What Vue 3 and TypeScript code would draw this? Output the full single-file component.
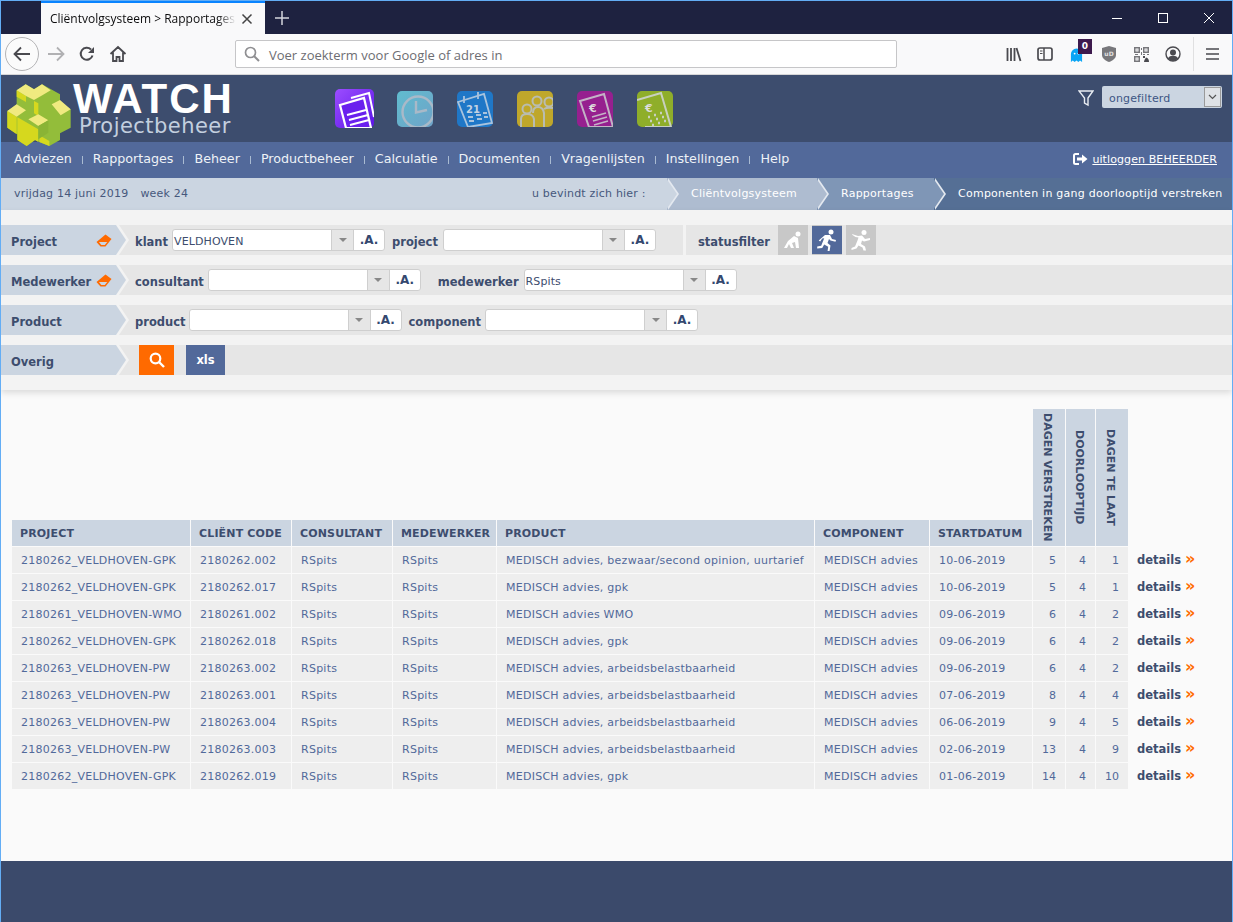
<template>
  <div class="window">
    <div class="titlebar">
      <div class="tab">
        <span class="tab-title">Cliëntvolgsysteem &gt; Rapportages &gt;</span>
        <svg class="tab-close" width="12" height="12" viewBox="0 0 12 12"><path d="M1.5 1.5l9 9M10.500 1.500l-9 9" stroke="#444" stroke-width="1.500" /></svg>
      </div>
      <svg class="new-tab" width="14" height="14" viewBox="0 0 14 14"><path d="M7 0v14M0 7h14" stroke="#d4d5dc" stroke-width="1.500" /></svg>
      <div class="window-controls">
        <svg width="10" height="10" viewBox="0 0 10 10"><path d="M0 5.500h10" stroke="#fff" /></svg>
        <svg width="10" height="10" viewBox="0 0 10 10"><rect x=".5" y=".5" width="9" height="9" fill="none" stroke="#fff" /></svg>
        <svg width="10" height="10" viewBox="0 0 10 10"><path d="M0 0l10 10M10 0L0 10" stroke="#fff" /></svg>
      </div>
    </div>

    <div class="toolbar">
      <div class="back">
        <svg width="18" height="16" viewBox="0 0 18 16"><path d="M17 8H2M8 1.500L1.500 8 8 14.500" fill="none" stroke="#4a4a4f" stroke-width="1.800" /></svg>
      </div>
      <svg class="fwd" width="18" height="16" viewBox="0 0 18 16"><path d="M1 8h15M10 1.500L16.500 8 10 14.500" fill="none" stroke="#b1b1b3" stroke-width="1.800" /></svg>
      <svg class="reload" width="16" height="16" viewBox="0 0 16 16"><path d="M13.500 9.500A6 6 0 1 1 12 3.500" fill="none" stroke="#4a4a4f" stroke-width="2" /><path d="M15 1v6H9z" fill="#4a4a4f" /></svg>
      <svg class="home" width="18" height="18" viewBox="0 0 18 18"><path d="M1.500 9L9 2l7.500 7M4 7.500V16h3.500v-4h3v4H14V7.500" fill="none" stroke="#4a4a4f" stroke-width="1.800" /></svg>
      <div class="urlbar">
        <svg width="16" height="16" viewBox="0 0 16 16"><circle cx="6.500" cy="6.500" r="5" fill="none" stroke="#8f8f92" stroke-width="1.700" /><path d="M10 10l5 5" stroke="#8f8f92" stroke-width="2" /></svg>
        <span>Voer zoekterm voor Google of adres in</span>
      </div>
      <div class="tools">
        <svg class="t-lib" width="16" height="15" viewBox="0 0 16 15"><path d="M1.500 1v13M5 1v13M8.500 1v13M10.500 1l4 13" fill="none" stroke="#4a4a4f" stroke-width="1.800" /></svg>
        <svg class="t-side" width="16" height="14" viewBox="0 0 16 14"><rect x="1" y="1" width="14" height="12" rx="2" fill="none" stroke="#4a4a4f" stroke-width="1.700" /><path d="M7 1v12" stroke="#4a4a4f" stroke-width="1.500" /><path d="M3 4h2.500M3 6.500h2.500" stroke="#4a4a4f" /></svg>
        <div class="ghost">
          <svg width="13" height="14" viewBox="0 0 14 15"><path d="M1 15V6.500a6 6 0 0 1 12 0V15l-2.200-1.500L9 15l-2-1.500L5 15l-2-1.500z" fill="#0aa5f5" /><circle cx="5" cy="6" r="1" fill="#fff" /><circle cx="9" cy="6" r="1" fill="#fff" /></svg>
          <span class="ghost-badge">0</span>
        </div>
        <svg class="t-ub" width="14" height="16" viewBox="0 0 14 16"><path d="M0 2l7-2 7 2v7c0 3-3 5.500-7 7-4-1.500-7-4-7-7z" fill="#77777b" /><text x="7" y="9.500" class="ub-text">uD</text></svg>
        <svg class="t-qr" width="15" height="15" viewBox="0 0 15 15"><path d="M0 0h6v6H0zM1.500 1.500v3h3v-3zM9 0h6v6H9zM10.500 1.500v3h3v-3zM0 9h6v6H0zM1.500 10.500v3h3v-3zM7 1h1v2H7zM7 5h1v3H7zM1 7h3v1H1zM9 7h2v1H9zM13 7h2v1h-2zM2.500 2.500h1v1h-1zM11.500 2.500h1v1h-1zM2.500 11.500h1v1h-1z" fill="#77777b" fill-rule="evenodd" /><path d="M9 9h2v2H9zM12 10.500q3 .5 3 4.500h-5q0-2 2-4.500z" fill="#4a4a4f" /></svg>
        <svg class="t-user" width="16" height="16" viewBox="0 0 16 16"><circle cx="8" cy="8" r="7" fill="none" stroke="#4a4a4f" stroke-width="1.400" /><circle cx="8" cy="6.500" r="3" fill="#4a4a4f" /><path d="M2.800 12.500c1-2 3-2.700 5.200-2.700s4.200.7 5.200 2.700A7 7 0 0 1 8 15a7 7 0 0 1-5.200-2.500z" fill="#4a4a4f" /></svg>
        <i class="tool-sep"></i>
        <svg class="t-menu" width="13" height="12" viewBox="0 0 13 12"><path d="M0 1h13M0 6h13M0 11h13" stroke="#4a4a4f" stroke-width="1.700" /></svg>
      </div>
    </div>

    <div class="app-head">
      <div class="brand">
        <svg class="logo" width="110" height="74" viewBox="3 0 330 222">
          <path d="M50 43L77 25l25 15 24-15 54 30v25l32 20v55l-32 17v20l-32 18-30-12-13-6-25 18-28-18v-17l-30-20v-50l28-20z" fill="#93bd3a" />
          <path d="M50 43l28 17v18L50 62zM22 105l28 17v53l-28-20zM50 122l65 38v38l-10-6-25 18-28-18v-70zM102 75l13 7v38l-13-8zM118 178l30 17v15l-30-12z" fill="#d6d81e" />
          <path d="M50 43L77 25l25 15 24-15 26 18-25 15-25 14-24-12zM22 105l28-20 28 18-28 19zM85 130l30-15 30 18-30 17zM155 85l25-13 32 28-30 18z" fill="#f0ea80" />
          <path d="M115 150l30-17v37l-30 20z" fill="#8ab435" />
        </svg>
        <div class="brand-text">
          <div class="brand-name">WATCH</div>
          <div class="brand-sub">Projectbeheer</div>
        </div>
      </div>

      <div class="modules">
        <svg class="mod" width="39" height="39" viewBox="0 0 39 39">
          <defs><linearGradient id="gp" x1="0" y1="0" x2="1" y2="1"><stop offset="0" stop-color="#9c4dff" /><stop offset="1" stop-color="#5a14e6" /></linearGradient></defs>
          <rect width="39" height="39" rx="5" fill="url(#gp)" />
          <path d="M16 9l18-5 5 24" fill="none" stroke="#fff" stroke-width="2" />
          <path d="M5 16L29 9l7 30H11z" fill="#6a20ee" stroke="#fff" stroke-width="2.200" />
          <path d="M12 26l19-5M14 31l19-5M15 36l19-5" stroke="#fff" stroke-width="2" />
        </svg>
        <svg class="mod sm" width="36" height="36" viewBox="0 0 36 36">
          <defs><linearGradient id="gc" x1="0" y1="0" x2="1" y2="1"><stop offset="0" stop-color="#60bccf" /><stop offset="1" stop-color="#6fa3c8" /></linearGradient></defs>
          <rect width="36" height="36" rx="5" fill="url(#gc)" />
          <circle cx="21" cy="21" r="15.500" fill="none" stroke="#a9b9c8" stroke-width="2.400" />
          <path d="M19 10v11.500l11-2.500" fill="none" stroke="#a9b9c8" stroke-width="2.400" />
        </svg>
        <svg class="mod sm" width="36" height="36" viewBox="0 0 36 36">
          <rect width="36" height="36" rx="5" fill="#1f77c7" />
          <path d="M1 11l26-8 8 29-24 4z" fill="none" stroke="#a9c3dd" stroke-width="1.800" />
          <path d="M7 5v7M21 1v7" stroke="#a9c3dd" stroke-width="1.800" />
          <text x="16" y="22" class="cal-text">21</text>
          <path d="M11 26h5M19 24h5M26 22h4M12 30h5M20 28h5M27 26h4" stroke="#a9c3dd" stroke-width="2" />
        </svg>
        <svg class="mod sm" width="36" height="36" viewBox="0 0 36 36">
          <rect width="36" height="36" rx="5" fill="#bfa72b" />
          <circle cx="10" cy="18" r="4.500" fill="none" stroke="#b9bcb0" stroke-width="2" />
          <circle cx="20" cy="10" r="4.500" fill="none" stroke="#b9bcb0" stroke-width="2" />
          <circle cx="32" cy="11" r="4.500" fill="none" stroke="#b9bcb0" stroke-width="2" />
          <path d="M4 36V28q0-5 6-5t7 5v8M16 22q0-6 5-6t6 6v14M27 18q3-2 9-1" fill="none" stroke="#b9bcb0" stroke-width="2" />
        </svg>
        <svg class="mod sm" width="36" height="36" viewBox="0 0 36 36">
          <rect width="36" height="36" rx="5" fill="#96208f" />
          <path d="M3 10l24-7 9 33H12z" fill="none" stroke="#c3b3c6" stroke-width="2" />
          <text x="12" y="21" class="eur-text">€</text>
          <path d="M15 26l14-4M16 30l14-4M17 34l14-4" stroke="#c3b3c6" stroke-width="1.600" />
        </svg>
        <svg class="mod sm" width="36" height="36" viewBox="0 0 36 36">
          <rect width="36" height="36" rx="5" fill="#8fae2a" />
          <path d="M0 9l24-7 10 34H8" fill="none" stroke="#c8d0bf" stroke-width="2" />
          <text x="8" y="21" class="eur-text">€</text>
          <path d="M11 26h2M17 24h2M23 22h2M13 30h2M19 28h2M25 26h2M15 34h2M21 32h2M27 30h2" stroke="#c8d0bf" stroke-width="2.400" />
        </svg>
      </div>

      <div class="head-filter">
        <svg width="16" height="18" viewBox="0 0 16 18"><path d="M1 2h14L10 9v7L6.500 14V9z" fill="none" stroke="#e9edf3" stroke-width="1.400" /></svg>
        <div class="head-select">
          <span>ongefilterd</span>
          <div class="head-select-btn">
            <svg width="9" height="6" viewBox="0 0 9 6"><path d="M1 1l3.500 3.500L8 1" fill="none" stroke="#555" stroke-width="1.200" /></svg>
          </div>
        </div>
      </div>
    </div>

    <nav class="mainnav">
      <div class="nav-items">
        <template v-for="(item, i) in navItems" :key="item">
          <i v-if="i > 0" class="nav-sep"></i>
          <a>{{ item }}</a>
        </template>
      </div>
      <a class="logout">
        <svg width="15" height="12" viewBox="0 0 15 12"><path d="M6 1H2.500A1.500 1.500 0 0 0 1 2.500v7A1.500 1.500 0 0 0 2.500 11H6" fill="none" stroke="#fff" stroke-width="2" /><path d="M4 4.500h5V1.500L14.500 6 9 10.500v-3H4z" fill="#fff" /></svg>
        <span>uitloggen BEHEERDER</span>
      </a>
    </nav>

    <div class="crumbbar">
      <div class="crumb-date">
        <span>vrijdag 14 juni 2019</span>
        <span>week 24</span>
      </div>
      <div class="crumb-here">u bevindt zich hier :</div>
      <div class="crumb c1">Cliëntvolgsysteem</div>
      <div class="crumb c2">Rapportages</div>
      <div class="crumb c3">Componenten in gang doorlooptijd verstreken</div>
    </div>

    <section class="filters">
      <div class="frow">
        <div class="flabel">
          <span>Project</span>
          <svg class="eraser" width="16" height="13" viewBox="0 0 16 13"><path d="M9.500.5l6 4.500-6 7.500H4.500L.5 8z" fill="#ff6a00" /><path d="M3 8h8.300l-2.500 3H5.300z" fill="#cbd5e1" /></svg>
        </div>
        <div class="fields f-project">
          <label>klant</label>
          <div class="combo w-160"><span>VELDHOVEN</span><b><i></i></b><em>.A.</em></div>
          <label class="loose">project</label>
          <div class="combo w-160"><span></span><b><i></i></b><em>.A.</em></div>
        </div>
        <div class="status-group">
          <label>statusfilter</label>
          <button class="status">
            <svg width="22" height="20" viewBox="0 0 22 20"><circle cx="16" cy="4" r="2.500" fill="#fff" /><path d="M2 18l4-7 6-5 4 2 1 10h-3l-1-6-3 1 2 5H9l-2-4-2 4z" fill="#fff" /></svg>
          </button>
          <button class="status on">
            <svg width="22" height="22" viewBox="0 0 22 22"><circle cx="15" cy="3" r="2.500" fill="#fff" /><path d="M9 6l5 0 2 4 4 1-.5 1.800-5-1.300-1.500-1.500-1.500 4 3 2.500-1 6h-2l.7-4.700-4-2.300-2 3.500-5 .5v-2l4-.7 3-7.500-2 .3-2 3-1.500-1z" fill="#fff" /></svg>
          </button>
          <button class="status">
            <svg width="22" height="22" viewBox="0 0 22 22"><circle cx="14" cy="3.500" r="2.500" fill="#fff" /><path d="M2 5l6 2 4-.5 3 3.500 5-1v2l-6 1.500-2-1-1 3.500 4 2.500 1 4h-2.500l-1-3-4-2-2 3-5 1.500v-2l3.500-1.500 2.500-6 1-3-3-.5-3-2z" fill="#fff" /></svg>
          </button>
        </div>
      </div>

      <div class="frow">
        <div class="flabel">
          <span>Medewerker</span>
          <svg class="eraser" width="16" height="13" viewBox="0 0 16 13"><path d="M9.500.5l6 4.500-6 7.500H4.500L.5 8z" fill="#ff6a00" /><path d="M3 8h8.300l-2.500 3H5.300z" fill="#cbd5e1" /></svg>
        </div>
        <div class="fields">
          <label>consultant</label>
          <div class="combo w-160"><span></span><b><i></i></b><em>.A.</em></div>
          <label class="gap-left">medewerker</label>
          <div class="combo w-160"><span>RSpits</span><b><i></i></b><em>.A.</em></div>
        </div>
      </div>

      <div class="frow">
        <div class="flabel"><span>Product</span></div>
        <div class="fields">
          <label class="tight">product</label>
          <div class="combo w-160"><span></span><b><i></i></b><em>.A.</em></div>
          <label>component</label>
          <div class="combo w-160"><span></span><b><i></i></b><em>.A.</em></div>
        </div>
      </div>

      <div class="frow">
        <div class="flabel"><span>Overig</span></div>
        <div class="fields f-other">
          <button class="btn-search">
            <svg width="16" height="16" viewBox="0 0 16 16"><circle cx="6.500" cy="6.500" r="4.800" fill="none" stroke="#fff" stroke-width="2.200" /><path d="M10 10l5 5" stroke="#fff" stroke-width="2.400" /></svg>
          </button>
          <button class="btn-xls">xls</button>
        </div>
      </div>
    </section>

    <main class="content">
      <table class="report">
        <colgroup>
          <col v-for="w in colWidths" :key="w.id" :style="{ width: w.px + 'px' }" />
        </colgroup>
        <thead>
          <tr>
            <td colspan="7" class="blank spacer"></td>
            <th rowspan="2" class="vert"><span>DAGEN VERSTREKEN</span></th>
            <th rowspan="2" class="vert"><span>DOORLOOPTIJD</span></th>
            <th rowspan="2" class="vert"><span>DAGEN TE LAAT</span></th>
            <td rowspan="2" class="blank"></td>
          </tr>
          <tr>
            <th v-for="h in headers" :key="h">{{ h }}</th>
          </tr>
        </thead>
        <tbody>
          <tr v-for="(r, i) in rows" :key="i">
            <td>{{ r.project }}</td>
            <td>{{ r.code }}</td>
            <td>RSpits</td>
            <td>RSpits</td>
            <td>{{ r.product }}</td>
            <td>MEDISCH advies</td>
            <td>{{ r.start }}</td>
            <td class="num">{{ r.past }}</td>
            <td class="num">4</td>
            <td class="num">{{ r.late }}</td>
            <td class="details">details <span>»</span></td>
          </tr>
        </tbody>
      </table>
    </main>

    <footer class="pagefoot"></footer>
  </div>
</template>

<script setup lang="ts">
interface ReportRow {
  project: string;
  code: string;
  product: string;
  start: string;
  past: number;
  late: number;
}

const navItems = [
  "Adviezen",
  "Rapportages",
  "Beheer",
  "Productbeheer",
  "Calculatie",
  "Documenten",
  "Vragenlijsten",
  "Instellingen",
  "Help",
];

const headers = [
  "PROJECT",
  "CLIËNT CODE",
  "CONSULTANT",
  "MEDEWERKER",
  "PRODUCT",
  "COMPONENT",
  "STARTDATUM",
];

const colWidths = [
  { id: "project", px: 179 },
  { id: "code", px: 101 },
  { id: "cons", px: 101 },
  { id: "mdw", px: 104 },
  { id: "product", px: 318 },
  { id: "comp", px: 115 },
  { id: "start", px: 103 },
  { id: "past", px: 33 },
  { id: "loop", px: 30 },
  { id: "late", px: 33 },
  { id: "det", px: 100 },
];

const GPK = "2180262_VELDHOVEN-GPK";
const PW = "2180263_VELDHOVEN-PW";
const ARBEID = "MEDISCH advies, arbeidsbelastbaarheid";

const rows: ReportRow[] = [
  { project: GPK, code: "2180262.002", product: "MEDISCH advies, bezwaar/second opinion, uurtarief", start: "10-06-2019", past: 5, late: 1 },
  { project: GPK, code: "2180262.017", product: "MEDISCH advies, gpk", start: "10-06-2019", past: 5, late: 1 },
  { project: "2180261_VELDHOVEN-WMO", code: "2180261.002", product: "MEDISCH advies WMO", start: "09-06-2019", past: 6, late: 2 },
  { project: GPK, code: "2180262.018", product: "MEDISCH advies, gpk", start: "09-06-2019", past: 6, late: 2 },
  { project: PW, code: "2180263.002", product: ARBEID, start: "09-06-2019", past: 6, late: 2 },
  { project: PW, code: "2180263.001", product: ARBEID, start: "07-06-2019", past: 8, late: 4 },
  { project: PW, code: "2180263.004", product: ARBEID, start: "06-06-2019", past: 9, late: 5 },
  { project: PW, code: "2180263.003", product: ARBEID, start: "02-06-2019", past: 13, late: 9 },
  { project: GPK, code: "2180262.019", product: "MEDISCH advies, gpk", start: "01-06-2019", past: 14, late: 10 },
];
</script>

<style>
html,
body {
  margin: 0;
  background: #fafafa;
}
</style>

<style scoped>
.window {
  width: 1233px;
  height: 922px;
  box-sizing: border-box;
  border: 1px solid #63adf5;
  border-bottom: 0;
  display: flex;
  flex-direction: column;
  overflow: hidden;
  font-family: "DejaVu Sans", Verdana, sans-serif;
  font-size: 11px;
  color: #3d4d6e;
  background: #fafafa;
}

/* browser chrome */
.titlebar {
  height: 33px;
  background: #1e2240;
  display: flex;
  align-items: stretch;
  flex: none;
}
.tab {
  width: 224px;
  margin-left: 40px;
  background: #f9f9fa;
  border-top: 2px solid #0a84ff;
  box-sizing: border-box;
  display: flex;
  align-items: center;
  padding-left: 9px;
  font-family: "Open Sans", sans-serif;
  font-size: 12px;
  color: #0c0c0d;
}
.tab-title {
  width: 186px;
  flex: none;
  white-space: nowrap;
  overflow: hidden;
  -webkit-mask-image: linear-gradient(90deg, #000 90%, transparent 100%);
  mask-image: linear-gradient(90deg, #000 90%, transparent 100%);
}
.tab-close {
  margin-left: 5px;
}
.new-tab {
  align-self: center;
  margin-left: 10px;
}
.window-controls {
  margin-left: auto;
  display: flex;
  align-items: center;
  gap: 36px;
  padding-right: 18px;
}

.toolbar {
  height: 40px;
  flex: none;
  background: #f9f9fa;
  border-bottom: 1px solid #d6d6d7;
  display: flex;
  align-items: center;
}
.back {
  width: 32px;
  height: 32px;
  margin-left: 4px;
  border: 1px solid #b4b4b6;
  border-radius: 50%;
  display: flex;
  align-items: center;
  justify-content: center;
  background: #fbfbfb;
}
.fwd {
  margin-left: 8px;
}
.reload {
  margin-left: 14px;
}
.home {
  margin-left: 14px;
}
.urlbar {
  margin-left: 108px;
  width: 662px;
  height: 28px;
  box-sizing: border-box;
  background: #fff;
  border: 1px solid #c6c6c8;
  border-radius: 2px;
  display: flex;
  align-items: center;
  gap: 9px;
  padding-left: 8px;
  font-family: "Open Sans", sans-serif;
  font-size: 13px;
  color: #6d6d72;
}
.urlbar span {
  padding-top: 2px;
}
.tools {
  margin-left: auto;
  display: flex;
  align-items: center;
  padding-right: 13px;
}
.t-side {
  margin-left: 15px;
}
.ghost {
  position: relative;
  margin-left: 17px;
  height: 16px;
}
.ghost svg {
  display: block;
  margin-top: 2px;
}
.ghost-badge {
  position: absolute;
  left: 8px;
  top: -7px;
  width: 14px;
  height: 15px;
  background: #3d1a4d;
  color: #fff;
  font-size: 9px;
  font-weight: 700;
  text-align: center;
  line-height: 15px;
}
.t-ub {
  margin-left: 19px;
}
.t-qr {
  margin-left: 18px;
}
.t-user {
  margin-left: 16px;
}
.tool-sep {
  width: 1px;
  height: 34px;
  background: #e0e0e1;
  margin-left: 12px;
}
.t-menu {
  margin-left: 12px;
}
.ub-text {
  font-family: "DejaVu Sans", sans-serif;
  font-size: 6px;
  font-weight: 700;
  fill: #e0e0e0;
  text-anchor: middle;
}

/* application header */
.app-head {
  height: 67px;
  flex: none;
  background: #3d4d6e;
  display: flex;
  position: relative;
  z-index: 2;
}
.brand {
  position: relative;
  width: 334px;
  flex: none;
  box-sizing: border-box;
  padding: 6px 0 0 72px;
}
/* the logo hangs over the top edge of the menu bar */
.logo {
  position: absolute;
  left: 0;
  top: 1px;
}
.brand-name {
  font-family: "Liberation Sans", Arial, sans-serif;
  font-weight: 700;
  font-size: 42px;
  line-height: 35px;
  color: #fff;
  letter-spacing: 2px;
}
.brand-sub {
  font-family: "DejaVu Sans", sans-serif;
  font-size: 21px;
  line-height: 20px;
  letter-spacing: 0.45px;
  color: #c3cfdf;
  margin-left: 6px;
}
.modules {
  display: flex;
  align-items: flex-start;
  padding-top: 14px;
  gap: 24px;
}
.mod {
  display: block;
}
.mod.sm {
  margin-top: 2px;
}
.modules .mod:first-child {
  margin-right: -1px;
}
.cal-text {
  font-family: "DejaVu Sans", sans-serif;
  font-size: 10px;
  font-weight: 700;
  fill: #c3d2e2;
  text-anchor: middle;
}
.eur-text {
  font-family: "DejaVu Sans", sans-serif;
  font-size: 11px;
  font-weight: 700;
  fill: #ddd;
}
.head-filter {
  margin-left: auto;
  display: flex;
  align-items: flex-start;
  padding: 11px 10px 0 0;
  gap: 8px;
}
.head-filter > svg {
  margin-top: 3px;
}
.head-select {
  width: 120px;
  height: 22px;
  background: #cbd5e1;
  border-radius: 2px;
  display: flex;
  align-items: center;
  justify-content: space-between;
  padding-left: 7px;
  box-sizing: border-box;
  color: #3d5584;
  font-size: 11px;
  letter-spacing: 0.15px;
}
.head-select span {
  padding-top: 2px;
}
.head-select-btn {
  width: 17px;
  height: 20px;
  margin-right: 1px;
  background: #dfe2e6;
  border: 1px solid #9a9a9a;
  box-sizing: border-box;
  display: flex;
  align-items: center;
  justify-content: center;
}

.mainnav {
  height: 36px;
  flex: none;
  background: #52699a;
  display: flex;
  align-items: center;
  justify-content: space-between;
  padding: 0 15px 0 13px;
  color: #fff;
  font-size: 12.700px;
}
.nav-items {
  display: flex;
  align-items: center;
  color: #eef2f7;
  padding-bottom: 3px;
}
.nav-sep {
  width: 1px;
  height: 8px;
  margin: 3px 10px 0;
  background: #a9bbd2;
}
.logout {
  display: flex;
  align-items: center;
  gap: 4px;
  font-size: 11px;
  letter-spacing: 0.1px;
  padding-bottom: 2px;
}
.logout span {
  text-decoration: underline;
}

.crumbbar {
  height: 32px;
  flex: none;
  background: #cbd5e1;
  display: flex;
  align-items: stretch;
  line-height: 31px;
  font-size: 11px;
  letter-spacing: 0.25px;
}
.crumb-date {
  width: 531px;
  box-sizing: border-box;
  padding-left: 13px;
  display: flex;
  gap: 12px;
  color: #46587c;
  letter-spacing: 0.2px;
}
.crumb-here {
  width: 135px;
  color: #46587c;
  letter-spacing: 0.2px;
}
.crumb {
  position: relative;
  color: #fff;
  box-sizing: border-box;
  padding-left: 24px;
  white-space: nowrap;
}
.crumb::after {
  content: "";
  position: absolute;
  z-index: 1;
  top: 0;
  left: -1px;
  width: 11px;
  height: 100%;
  background: var(--prev);
  clip-path: polygon(0 0, 100% 50%, 0 100%);
}
.crumb::before {
  content: "";
  position: absolute;
  top: 0;
  left: 1px;
  width: 11px;
  height: 100%;
  background: #e4e9f0;
  clip-path: polygon(0 0, 100% 50%, 0 100%);
}
.c1 {
  --prev: #cbd5e1;
  width: 150px;
  background: #aebcd0;
}
.c2 {
  --prev: #aebcd0;
  width: 117px;
  background: #7f96b6;
}
.c3 {
  --prev: #7f96b6;
  flex: 1;
  background: #556f95;
}

/* filter block */
.filters {
  flex: none;
  height: 180px;
  box-sizing: border-box;
  background: #f3f3f3;
  padding-top: 15px;
  display: flex;
  flex-direction: column;
  gap: 10px;
  box-shadow: 0 3px 6px rgba(0, 0, 0, 0.12);
  position: relative;
}
.frow {
  height: 30px;
  display: flex;
  background: #e6e6e6;
  align-items: stretch;
  position: relative;
}
/* light band that follows the arrow of the row label */
.frow::before {
  content: "";
  position: absolute;
  left: 0;
  top: 0;
  width: 128px;
  height: 100%;
  background: #f3f3f3;
  clip-path: polygon(0 0, 118px 0, 100% 50%, 118px 100%, 0 100%);
}
.flabel {
  width: 125px;
  box-sizing: border-box;
  flex: none;
  background: #cbd5e1;
  clip-path: polygon(0 0, 115px 0, 100% 50%, 115px 100%, 0 100%);
  display: flex;
  align-items: center;
  padding: 4px 0 0 10px;
  font-weight: 700;
  font-size: 11.500px;
  color: #3d4d6e;
  position: relative;
  z-index: 1;
}
.eraser {
  position: absolute;
  left: 95px;
  top: 9px;
}
.fields {
  display: flex;
  align-items: center;
  padding-left: 9px;
  gap: 4px;
  position: relative;
}
.fields label,
.status-group label {
  font-weight: 700;
  font-size: 11.500px;
  padding-top: 4px;
  color: #3d4d6e;
}
.combo {
  display: flex;
  height: 22px;
  box-sizing: border-box;
  border: 1px solid #cfcfcf;
  border-radius: 3px;
  background: #fff;
  overflow: hidden;
  margin-right: 3px;
}
.w-160 {
  width: 213px;
}
.combo span {
  flex: 1;
  padding-left: 1px;
  line-height: 23px;
  font-size: 11px;
  letter-spacing: 0.1px;
  color: #3d4d6e;
}
.combo b {
  width: 23px;
  flex: none;
  background: #e6e6e6;
  border-left: 1px solid #cfcfcf;
  border-right: 1px solid #cfcfcf;
  box-sizing: border-box;
  display: flex;
  align-items: center;
  justify-content: center;
}
.combo b i {
  border-left: 4px solid transparent;
  border-right: 4px solid transparent;
  border-top: 4px solid #888;
}
.combo em {
  width: 30px;
  flex: none;
  font-style: normal;
  text-align: center;
  font-weight: 700;
  font-size: 12px;
  line-height: 20px;
  color: #34486f;
}
.gap-left {
  margin-left: 10px;
  margin-right: 1px;
}
.loose {
  margin-right: 1px;
}
.tight {
  margin-right: -1px;
}
.f-project .combo:last-of-type {
  margin-right: 0;
}
.status-group {
  margin-left: 27px;
  padding-left: 12px;
  display: flex;
  align-items: center;
  flex: 1;
  border-left: 3px solid #f3f3f3;
}
.status-group label {
  margin-right: 8px;
}
.status {
  width: 30px;
  height: 30px;
  padding: 0;
  border: 0;
  background: #c8c8c8;
  margin-right: 4px;
  display: flex;
  align-items: center;
  justify-content: center;
}
.status.on {
  background: #52699a;
  border: 1px solid #c8c8c8;
  border-width: 1px 0;
}
.f-other {
  padding-left: 13px;
  gap: 12px;
  align-items: stretch;
}
.btn-search {
  width: 35px;
  border: 0;
  padding: 0;
  background: #ff6a00;
  display: flex;
  align-items: center;
  justify-content: center;
}
.btn-xls {
  width: 39px;
  border: 0;
  padding: 0;
  background: #52699a;
  color: #fff;
  font-family: inherit;
  font-weight: 700;
  font-size: 11.500px;
}

/* result table */
.content {
  flex: 1;
  padding: 19px 0 0 11px;
}
.report {
  table-layout: fixed;
  width: 1217px;
  border-collapse: separate;
  border-spacing: 0;
  font-size: 11px;
}
.report td,
.report th {
  padding: 0;
  box-sizing: border-box;
  border-right: 1px solid #fafafa;
  border-bottom: 1px solid #fafafa;
}
.report thead tr:nth-child(2) th {
  height: 27px;
  text-align: left;
  padding-left: 8px;
  background: #cbd5e1;
  font-size: 11px;
  font-weight: 700;
  letter-spacing: 0.15px;
  color: #3d4d6e;
  white-space: nowrap;
}
.report .blank {
  background: transparent;
  border: 0;
}
.report .spacer {
  height: 111px;
}
.report .vert {
  background: #cbd5e1;
  vertical-align: middle;
  text-align: center;
  color: #3d4d6e;
  padding-right: 3px;
}
.vert span {
  writing-mode: vertical-rl;
  font-size: 11px;
  font-weight: 700;
  white-space: nowrap;
  display: inline-block;
  vertical-align: middle;
}
.report tbody td {
  height: 27px;
  padding-left: 9px;
  background: #eeeeee;
  color: #51699a;
  white-space: nowrap;
  letter-spacing: 0.25px;
}
.report tbody td.num {
  text-align: right;
  padding: 0 9px 0 0;
  letter-spacing: 0;
}
.report tbody td.details {
  background: transparent;
  border: 0;
  padding: 0 0 1px 8px;
  font-weight: 700;
  font-size: 11.500px;
  letter-spacing: 0;
  color: #3d4d6e;
}
.details span {
  color: #ff6a00;
  font-size: 16px;
  line-height: 11px;
}

.pagefoot {
  height: 61px;
  flex: none;
  background: #3b4a6b;
}
</style>
